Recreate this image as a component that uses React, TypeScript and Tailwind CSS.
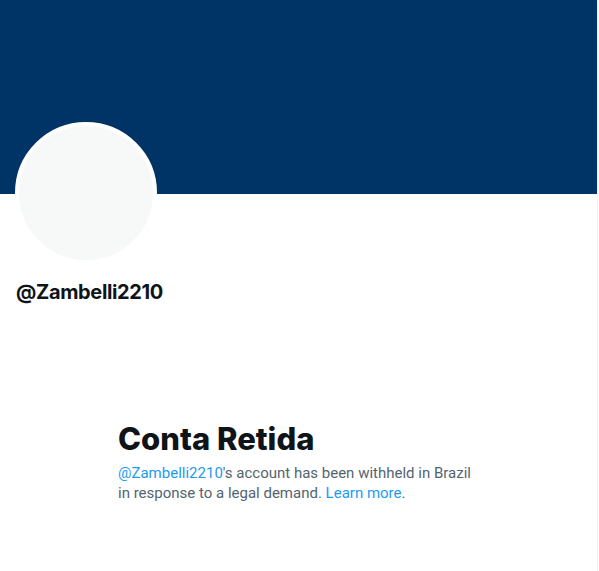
import React from "react";

export default function App() {
  return (
    <div className="w-[599px] h-[571px] bg-white overflow-hidden" style={{ fontFamily: "Roboto, 'Liberation Sans', sans-serif" }}>
      <div className="w-[598px] h-[571px] border-r border-[#eff3f4] flex flex-col">
        <div className="h-[194px] bg-[#003366] shrink-0" />
        <div className="px-[16px] relative">
          <div className="-mt-[72px] w-[142px] h-[142px] rounded-full bg-[#f7f9f9] border-[4px] border-white -ml-[1px]" />
          <div className="mt-[16px] text-[20px] font-bold leading-[24px] tracking-[-0.35px] text-[#0f1419]" style={{ fontFamily: "Inter, sans-serif" }}>@Zambelli2210</div>
        </div>
        <div className="pl-[118px] pr-[100px] mt-[117px]">
          <div className="text-[31px] font-extrabold leading-[36px] text-[#0f1419]" style={{ fontFamily: "Inter, sans-serif" }}>Conta Retida</div>
          <div className="mt-[6px] text-[15px] leading-[20px] text-[#536471] w-[360px]">
            <span className="text-[#1d9bf0]">@Zambelli2210</span>'s account has been withheld in Brazil in response to a legal demand.{" "}
            <span className="text-[#1d9bf0]">Learn more</span>.
          </div>
        </div>
      </div>
    </div>
  );
}
